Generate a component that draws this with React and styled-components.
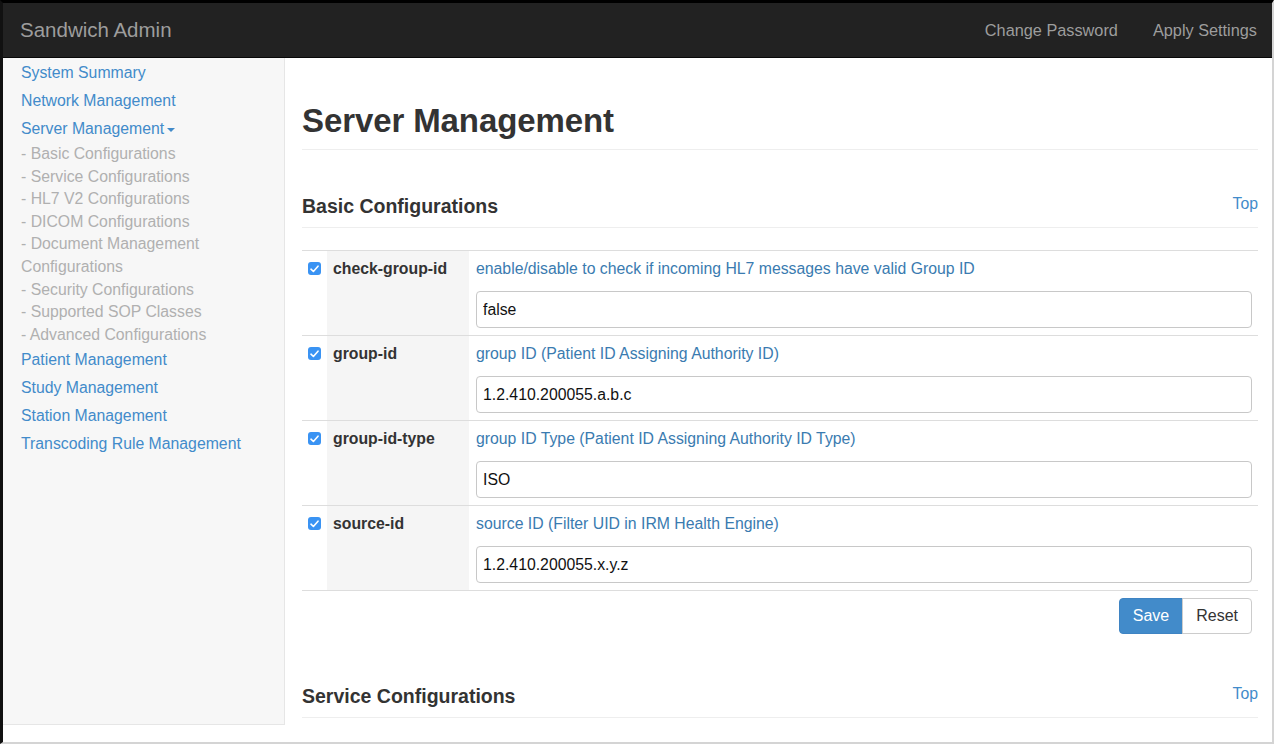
import React from 'react';
import styled, { createGlobalStyle } from 'styled-components';

const GlobalStyle = createGlobalStyle`
    html, body {
        margin: 0;
        padding: 0;
        background: #fff;
    }
    * {
        box-sizing: border-box;
    }
    body {
        font-family: 'Liberation Sans', Arial, Helvetica, sans-serif;
        font-size: 15.8px;
        color: #333;
    }
`;

const menu = [
    { label: 'System Summary' },
    { label: 'Network Management' },
    {
        label: 'Server Management',
        open: true,
        children: [
            'Basic Configurations',
            'Service Configurations',
            'HL7 V2 Configurations',
            'DICOM Configurations',
            'Document Management Configurations',
            'Security Configurations',
            'Supported SOP Classes',
            'Advanced Configurations',
        ],
    },
    { label: 'Patient Management' },
    { label: 'Study Management' },
    { label: 'Station Management' },
    { label: 'Transcoding Rule Management' },
];

const settings = [
    {
        name: 'check-group-id',
        desc: 'enable/disable to check if incoming HL7 messages have valid Group ID',
        value: 'false',
    },
    { name: 'group-id', desc: 'group ID (Patient ID Assigning Authority ID)', value: '1.2.410.200055.a.b.c' },
    {
        name: 'group-id-type',
        desc: 'group ID Type (Patient ID Assigning Authority ID Type)',
        value: 'ISO',
    },
    { name: 'source-id', desc: 'source ID (Filter UID in IRM Health Engine)', value: '1.2.410.200055.x.y.z' },
];

const App = () => {
    return (
        <Frame>
            <GlobalStyle />
            <Navbar>
                <Brand>Sandwich Admin</Brand>
                <NavLinks>
                    <NavLink>Change Password</NavLink>
                    <NavLink>Apply Settings</NavLink>
                </NavLinks>
            </Navbar>
            <Body>
                <Sidebar>
                    {menu.map((item) => (
                        <React.Fragment key={item.label}>
                            <SideLink>
                                {item.label}
                                {item.open && <Caret />}
                            </SideLink>
                            {item.children &&
                                item.children.map((c) => <SubLink key={c}>- {c}</SubLink>)}
                        </React.Fragment>
                    ))}
                </Sidebar>
                <Main>
                    <PageHeader>Server Management</PageHeader>

                    <SectionHeader>
                        <SectionTitle>Basic Configurations</SectionTitle>
                        <TopLink>Top</TopLink>
                    </SectionHeader>
                    <Table>
                        <tbody>
                            {settings.map((s) => (
                                <Row key={s.name}>
                                    <CheckCell>
                                        <CheckBox>
                                            <svg width="9" height="8" viewBox="0 0 9 8">
                                                <path
                                                    d="M1 4.2 L3.4 6.5 L8 1.2"
                                                    fill="none"
                                                    stroke="#fff"
                                                    strokeWidth="1.6"
                                                    strokeLinecap="round"
                                                    strokeLinejoin="round"
                                                />
                                            </svg>
                                        </CheckBox>
                                    </CheckCell>
                                    <NameCell>{s.name}</NameCell>
                                    <DescCell>
                                        <Desc>{s.desc}</Desc>
                                        <Input defaultValue={s.value} />
                                    </DescCell>
                                </Row>
                            ))}
                        </tbody>
                    </Table>
                    <Actions>
                        <Button primary>Save</Button>
                        <Button>Reset</Button>
                    </Actions>

                    <SectionHeader second>
                        <SectionTitle>Service Configurations</SectionTitle>
                        <TopLink>Top</TopLink>
                    </SectionHeader>
                    <Table>
                        <tbody>
                            <Row />
                        </tbody>
                    </Table>
                </Main>
            </Body>
        </Frame>
    );
};

export default App;

const Frame = styled.div`
    height: 744px;
    overflow: hidden;
    border-top: 3px solid #000;
    border-left: 3px solid #111;
    border-right: 2px solid #d4d4d4;
    border-bottom: 2px solid #d4d4d4;
    display: flex;
    flex-direction: column;
`;

const Navbar = styled.div`
    height: 55px;
    flex-shrink: 0;
    background: #222;
    border-bottom: 1px solid #080808;
    display: flex;
    align-items: center;
    justify-content: space-between;
    padding: 0 15px 0 17px;
`;

const Brand = styled.div`
    font-size: 20.5px;
    color: #9d9d9d;
`;

const NavLinks = styled.div`
    display: flex;
    gap: 35px;
`;

const NavLink = styled.div`
    font-size: 16.3px;
    color: #9d9d9d;
`;

const Body = styled.div`
    display: flex;
    align-items: flex-start;
    flex: 1;
    min-height: 0;
`;

const Sidebar = styled.div`
    width: 282px;
    height: 667px;
    flex-shrink: 0;
    background: #f7f7f7;
    border-right: 1px solid #e6e6e6;
    border-bottom: 1px solid #e6e6e6;
    padding: 1px 30px 0 18px;
`;

const SideLink = styled.div`
    line-height: 28px;
    color: #428bca;
    display: flex;
    align-items: center;
`;

const Caret = styled.span`
    display: inline-block;
    margin-left: 3px;
    margin-top: 2px;
    border-left: 4px solid transparent;
    border-right: 4px solid transparent;
    border-top: 4px solid #428bca;
`;

const SubLink = styled.div`
    line-height: 22.6px;
    color: #b0b0b0;
`;

const Main = styled.div`
    flex: 1;
    padding: 0 14px 0 17px;
`;

const PageHeader = styled.h1`
    margin: 45px 0 0;
    padding-bottom: 10px;
    border-bottom: 1px solid #eee;
    font-size: 33px;
    line-height: 36px;
    font-weight: 700;
    color: #333;
    letter-spacing: -0.1px;
`;

const SectionHeader = styled.div`
    display: flex;
    justify-content: space-between;
    align-items: center;
    margin-top: ${({ second }) => (second ? '51px' : '45px')};
    padding-bottom: 9px;
    border-bottom: 1px solid #eee;
    margin-bottom: 22px;
`;

const SectionTitle = styled.h3`
    margin: 0;
    font-size: 19.5px;
    line-height: 23px;
    font-weight: 700;
    color: #333;
`;

const TopLink = styled.span`
    color: #428bca;
    font-size: 15.8px;
    margin-top: -6px;
`;

const Table = styled.table`
    width: 100%;
    border-collapse: collapse;
    border-top: 1px solid #ddd;
`;

const Row = styled.tr`
    border-bottom: 1px solid #ddd;
    height: 84px;
    vertical-align: top;
`;

const CheckCell = styled.td`
    width: 25px;
    padding: 11px 0 0 6px;
`;

const CheckBox = styled.span`
    display: flex;
    align-items: center;
    justify-content: center;
    width: 13px;
    height: 13px;
    border-radius: 3px;
    background: #3a93f3;
`;

const NameCell = styled.td`
    width: 142px;
    background: #f5f5f5;
    padding: 8px 6px;
    font-weight: 700;
    line-height: 20px;
    color: #333;
`;

const DescCell = styled.td`
    padding: 8px 6px 7px 7px;
`;

const Desc = styled.div`
    line-height: 20px;
    color: #3a7bb0;
    margin-bottom: 12px;
`;

const Input = styled.input`
    display: block;
    width: 100%;
    height: 37px;
    border: 1px solid #c8c8c8;
    border-radius: 4px;
    padding: 0 6px;
    font-family: 'Liberation Sans', Arial, sans-serif;
    font-size: 15.8px;
    color: #111;
    outline: none;
`;

const Actions = styled.div`
    display: flex;
    justify-content: flex-end;
    margin: 7px 6px 0 0;
`;

const Button = styled.button`
    height: 36px;
    padding: 0 13px;
    font-family: 'Liberation Sans', Arial, sans-serif;
    font-size: 16px;
    border: 1px solid ${({ primary }) => (primary ? '#3f84c3' : '#ccc')};
    background: ${({ primary }) => (primary ? '#428bca' : '#fff')};
    color: ${({ primary }) => (primary ? '#fff' : '#333')};
    border-radius: ${({ primary }) => (primary ? '4px 0 0 4px' : '0 4px 4px 0')};
    margin-left: ${({ primary }) => (primary ? '0' : '-1px')};
`;
